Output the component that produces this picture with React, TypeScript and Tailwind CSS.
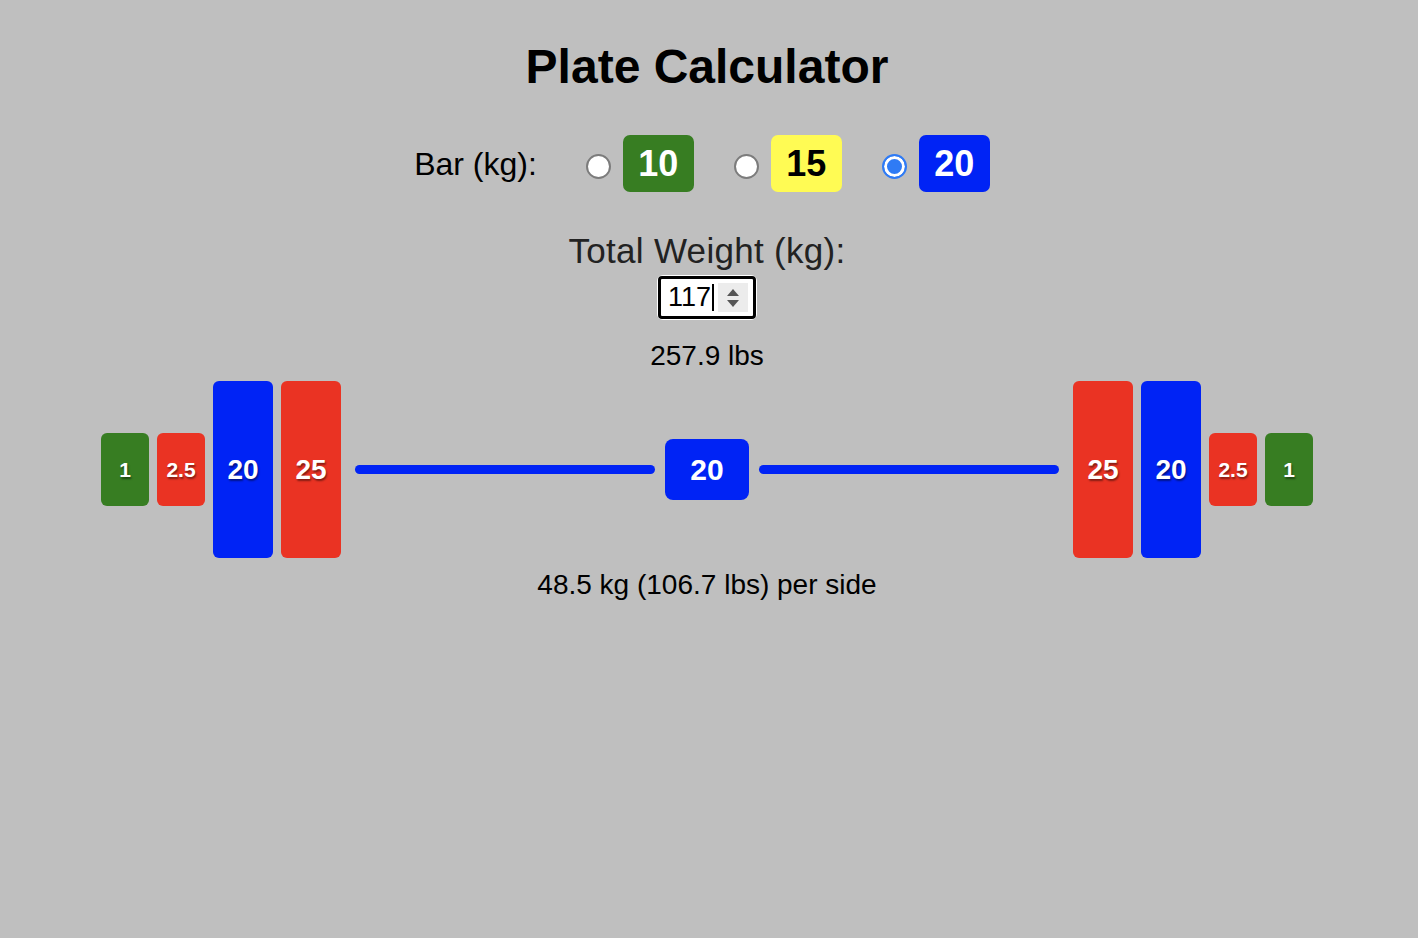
import * as React from "react";

type Plate = { kg: number; bg: string; big: boolean };

// plates on one side, outermost first
const plates: Plate[] = [
  { kg: 1, bg: "bg-[#377d22]", big: false },
  { kg: 2.5, bg: "bg-[#ea3323]", big: false },
  { kg: 20, bg: "bg-[#0023f5]", big: true },
  { kg: 25, bg: "bg-[#ea3323]", big: true },
];

const bars = [
  { kg: 10, cls: "bg-[#377d22] text-white" },
  { kg: 15, cls: "bg-[#fffb54] text-black" },
  { kg: 20, cls: "bg-[#0023f5] text-white" },
];

function PlateBlock({ plate }: { plate: Plate }) {
  const size = plate.big ? "w-[60px] h-[177px] text-[28px]" : "w-[48px] h-[73px] text-[21px]";
  return (
    <div
      className={`${plate.bg} ${size} rounded-[6px] flex items-center justify-center font-bold text-white [text-shadow:1px_2px_2px_rgba(0,0,0,0.45)]`}
    >
      {plate.kg}
    </div>
  );
}

export default function App() {
  const [bar, setBar] = React.useState(20);
  const total = 117;
  const perSide = (total - bar) / 2;

  return (
    <div className="min-h-screen bg-[#bfbfbf] pr-1 flex flex-col items-center font-['Liberation_Sans',Arial,sans-serif] text-black">
      <h1 className="mt-[43px] text-[48px] leading-none font-bold">Plate Calculator</h1>

      <div className="mt-[44px] mr-[10px] flex items-center h-[57px]">
        <span className="text-[32px] leading-none">Bar (kg):</span>
        {bars.map((b, i) => (
          <label key={b.kg} className={`flex items-center ${i === 0 ? "ml-[49px]" : "ml-[40px]"}`}>
            <input
              type="radio"
              name="bar"
              checked={bar === b.kg}
              onChange={() => setBar(b.kg)}
              className="mt-[6px] appearance-none w-[25px] h-[25px] rounded-full bg-white border-2 border-[#7c7c7c] checked:border-[#2f7bf5] checked:bg-[#2f7bf5] checked:shadow-[inset_0_0_0_3px_white]"
            />
            <span className={`ml-[12px] w-[71px] h-[57px] rounded-[7px] flex items-center justify-center text-[36px] font-bold ${b.cls}`}>
              {b.kg}
            </span>
          </label>
        ))}
      </div>

      <div className="mt-[41px] text-[35px] leading-none tracking-[0.3px] text-[#222]">Total Weight (kg):</div>

      {/* number field with caret and stepper */}
      <div className="mt-[7px] rounded-[6px] bg-white p-[1px]">
        <div className="w-[98px] h-[43px] rounded-[4px] border-[3px] border-black bg-white flex items-center pl-[7px] pr-[5px]">
          <span className="text-[27px] leading-none">{total}</span>
          <span className="ml-[1px] w-[1.5px] h-[27px] bg-black" />
          <span className="ml-auto w-[30px] h-[29px] bg-[#ececec] flex flex-col items-center justify-center gap-[4px]">
            <svg width="12" height="7" viewBox="0 0 12 7">
              <path d="M6 0 L12 7 L0 7 Z" fill="#555" />
            </svg>
            <svg width="12" height="7" viewBox="0 0 12 7">
              <path d="M0 0 L12 0 L6 7 Z" fill="#555" />
            </svg>
          </span>
        </div>
      </div>

      <div className="mt-[22px] text-[28px] leading-none">{(total * 2.20462).toFixed(1)} lbs</div>

      <div className="mt-[11px] h-[177px] flex items-center">
        <div className="flex items-center gap-[8px]">
          {plates.map((p, i) => (
            <PlateBlock key={i} plate={p} />
          ))}
        </div>
        <div className="ml-[14px] w-[300px] h-[9px] rounded-full bg-[#0023f5]" />
        <div className="mx-[10px] w-[84px] h-[61px] rounded-[8px] bg-[#0023f5] flex items-center justify-center text-white text-[30px] font-bold">
          {bar}
        </div>
        <div className="mr-[14px] w-[300px] h-[9px] rounded-full bg-[#0023f5]" />
        <div className="flex items-center gap-[8px]">
          {[...plates].reverse().map((p, i) => (
            <PlateBlock key={i} plate={p} />
          ))}
        </div>
      </div>

      <div className="mt-[13px] text-[28px] leading-none">
        {perSide} kg ({(perSide * 2.2).toFixed(1)} lbs) per side
      </div>
    </div>
  );
}
